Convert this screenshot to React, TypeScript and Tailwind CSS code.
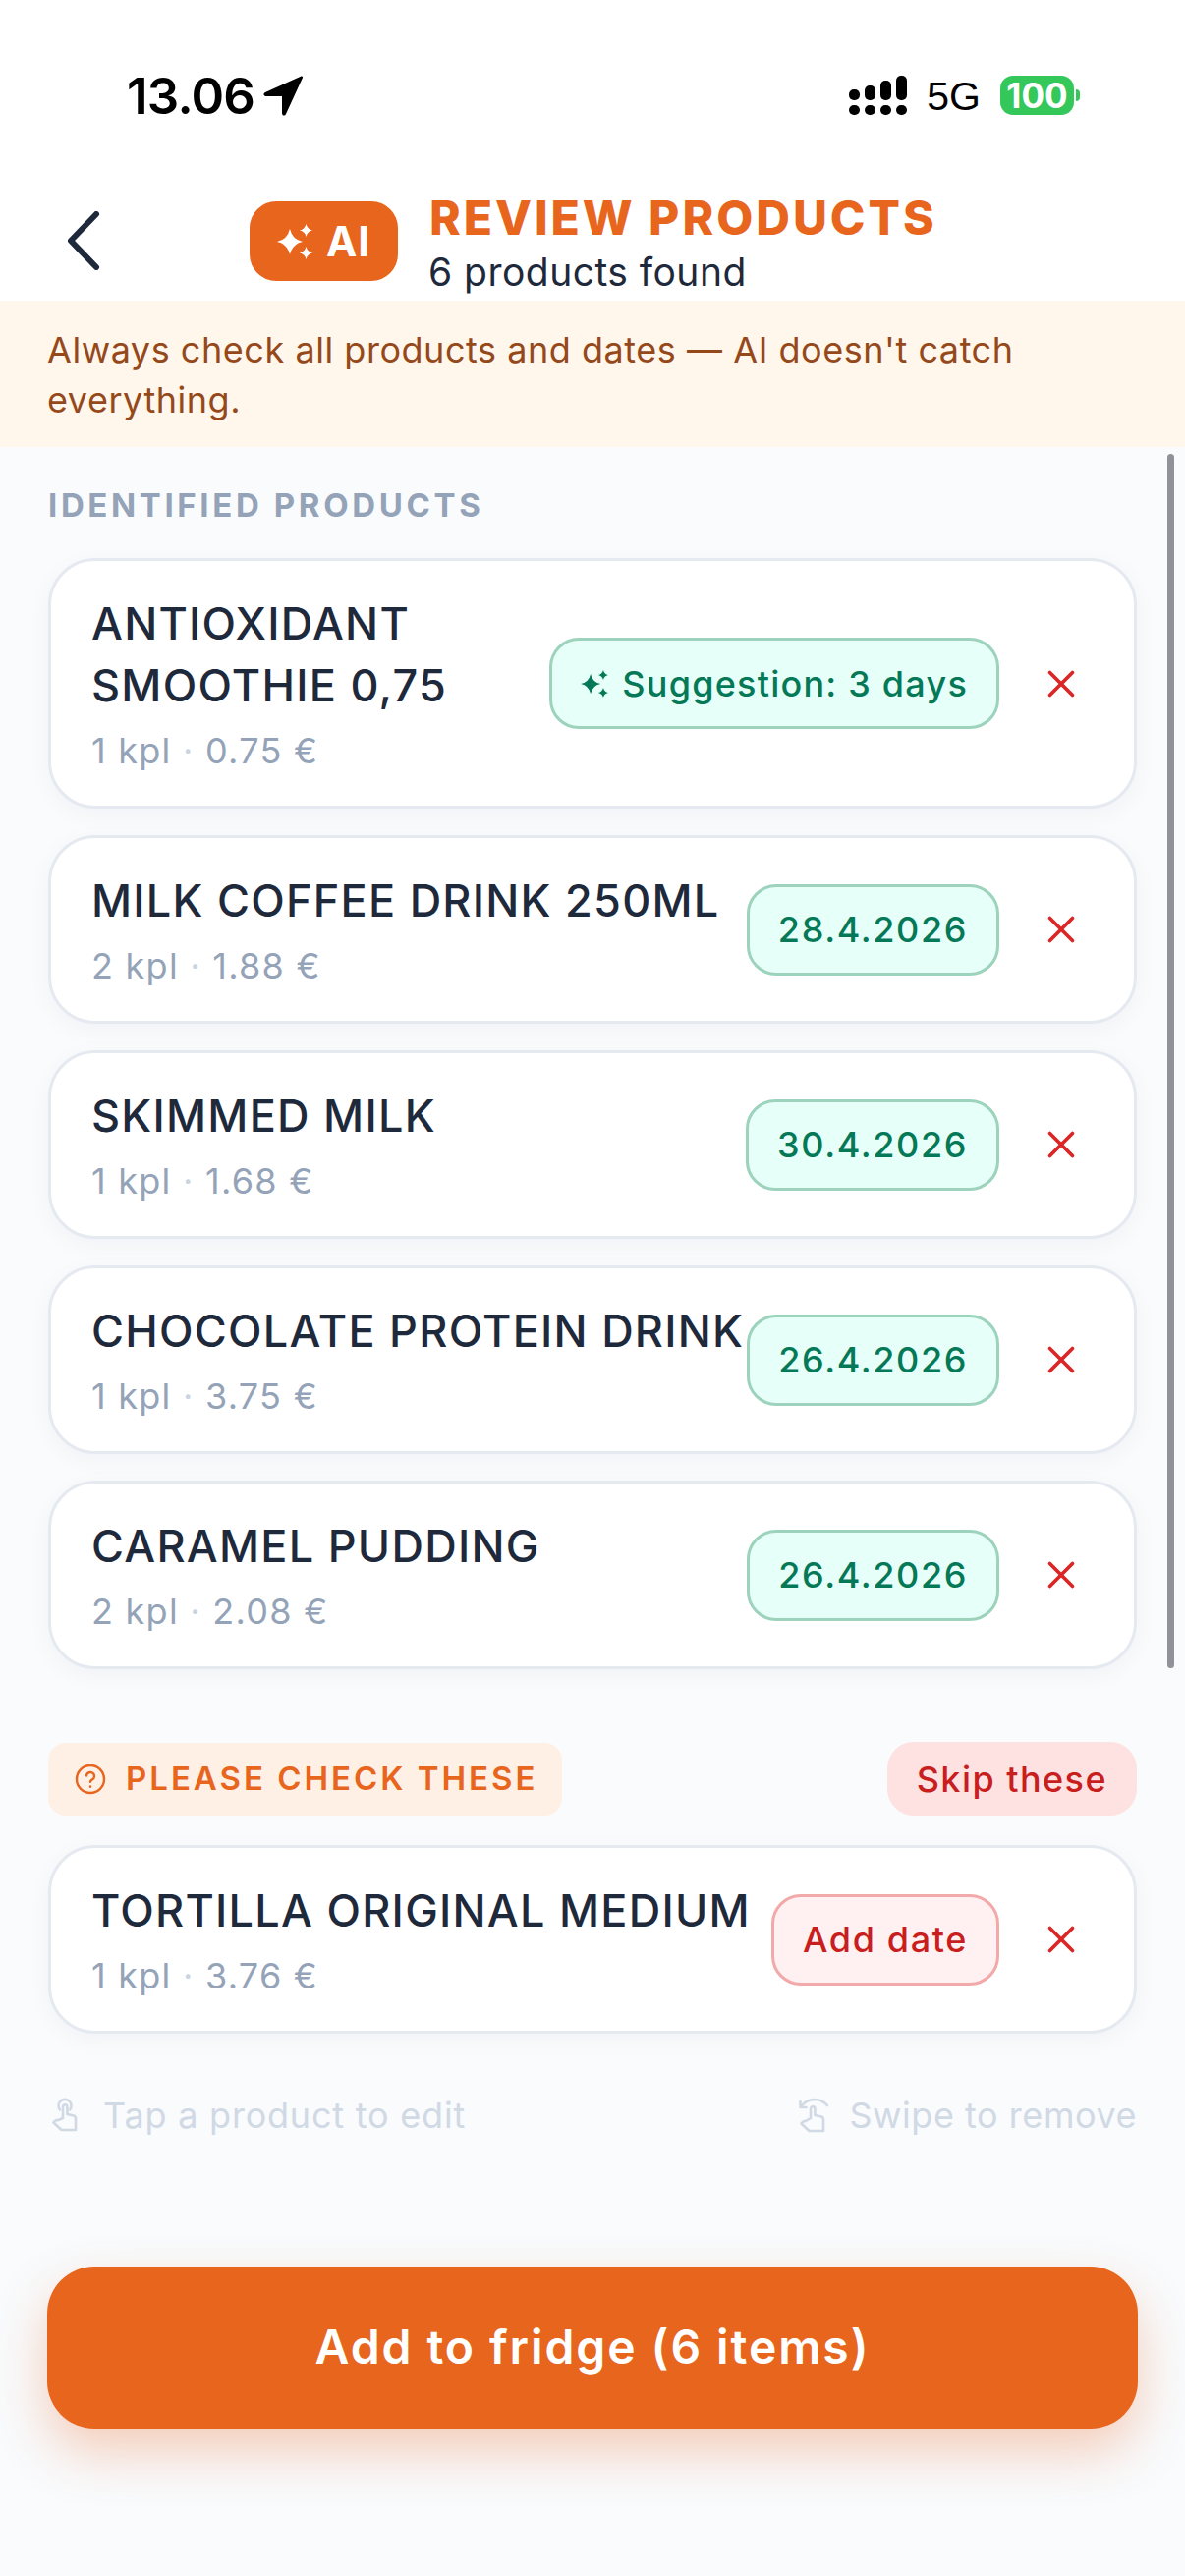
import React from "react";
import { X } from "lucide-react";

const SPARK = "M0 -1 Q.18 -.18 1 0 Q.18 .18 0 1 Q-.18 .18 -1 0 Q-.18 -.18 0 -1Z";

function Sparkles({ className }: { className?: string }) {
  return (
    <svg viewBox="0 0 36 36" className={className} fill="currentColor">
      <path transform="translate(13 18) scale(13)" d={SPARK} />
      <path transform="translate(29.5 6.5) scale(6.5)" d={SPARK} />
      <path transform="translate(29.5 29.5) scale(6.5)" d={SPARK} />
    </svg>
  );
}

function TapIcon({ className }: { className?: string }) {
  return (
    <svg viewBox="0 0 30 36" className={className} fill="none" stroke="currentColor" strokeWidth="2.6" strokeLinecap="round" strokeLinejoin="round">
      <path d="M10 12.5a6.5 6.5 0 1 1 10 0" />
      <path d="M13 21V9.5a2.2 2.2 0 0 1 4.4 0V17l6.4 1.6c1.4.4 2.2 1.5 2.2 2.9V33H11.5L3.5 25.5l1.8-1.8c.6-.6 1.5-.8 2.3-.5z" />
    </svg>
  );
}

function SwipeIcon({ className }: { className?: string }) {
  return (
    <svg viewBox="0 0 34 36" className={className} fill="none" stroke="currentColor" strokeWidth="2.6" strokeLinecap="round" strokeLinejoin="round">
      <path d="M3 9.5C7 4 12 2 17 2s9.5 2 13 6" />
      <path d="M2.5 4v6h6" />
      <path d="M13 21V11.5a2.2 2.2 0 0 1 4.4 0V18l6.4 1.6c1.4.4 2.2 1.5 2.2 2.9V34H11.5L3.5 26.5l1.8-1.8c.6-.6 1.5-.8 2.3-.5z" />
    </svg>
  );
}

function Card({ name, qty, price, chip, tone = "green", spark = false }: { name: string; qty: string; price: string; chip: string; tone?: "green" | "red"; spark?: boolean }) {
  return (
    <div className="flex items-center rounded-[48px] border-[3px] border-[#e5e9f0] bg-white pl-[41px] pr-[47px] shadow-[0_6px_24px_rgba(15,23,42,0.04)]">
      <div className="min-w-0 flex-1 pb-[21px] pt-[32px]">
        <div className="whitespace-pre text-[45px] font-medium leading-[63px] tracking-[0.028em] text-[#1e293b]">{name}</div>
        <div className="text-[36px] leading-[70px] tracking-[0.035em] text-[#94a3b8]">
          {qty} <span className="text-[#cbd5e1]">·</span> {price}
        </div>
      </div>
      {tone === "green" ? (
        <div className={`flex h-[93px] shrink-0 items-center gap-[14px] rounded-[30px] border-[3px] border-[#9dd3bd] bg-[#e6fff8] px-[29px] text-[36px] font-medium text-[#047857] ${spark ? "tracking-[0.034em]" : "tracking-[0.045em]"}`}>
          {spark && <Sparkles className="h-[28px] w-[28px]" />}
          {chip}
        </div>
      ) : (
        <div className="flex h-[93px] shrink-0 items-center rounded-[30px] border-[3px] border-[#f2a9a9] bg-[#fff1f1] px-[29px] text-[36px] font-medium tracking-[0.045em] text-[#c81e1e]">
          {chip}
        </div>
      )}
      <div className="ml-[36px] flex w-[54px] shrink-0 items-center justify-center text-[#dc2626]">
        <X size={46} strokeWidth={1.9} />
      </div>
    </div>
  );
}

export default function App() {
  return (
    <div className="relative flex h-[2622px] w-[1206px] flex-col overflow-hidden bg-[#f9fbfd] font-['Inter',sans-serif]">
      <div className="bg-white">
        <div className="flex h-[186px] items-start justify-between pl-[129px] pr-[107px] pt-[67px]">
          <div className="flex items-center gap-[8px]">
            <span className="text-[51px] font-semibold leading-[62px] tracking-[-0.015em] text-black">13.06</span>
            <svg viewBox="0 0 42 42" className="h-[42px] w-[42px]" fill="#000">
              <path d="M41 2 C41.5 1 40.5 0 39 .8 L3 17 C.5 18.3 1.2 21 4 21 L20 21 L20 38 C20 41 23 41.5 24 39 Z" />
            </svg>
          </div>
          <div className="flex items-start gap-[20px] pt-[10px]">
            <svg viewBox="0 0 59 40" className="h-[40px] w-[59px]" fill="#000">
              <rect x="0" y="14" width="11" height="11" rx="5" /><rect x="16" y="10" width="11" height="15" rx="5" /><rect x="32" y="5" width="11" height="20" rx="5" /><rect x="48" y="0" width="11" height="25" rx="5" />
              <rect x="0" y="30" width="11" height="10" rx="5" /><rect x="16" y="30" width="11" height="10" rx="5" /><rect x="32" y="30" width="11" height="10" rx="5" /><rect x="48" y="30" width="11" height="10" rx="5" />
            </svg>
            <span className="font-['Liberation_Sans',sans-serif] text-[41px] leading-[42px] text-black">5G</span>
            <div className="flex items-center gap-[2px]">
              <div className="flex h-[40px] w-[75px] items-center justify-center rounded-[13px] bg-[#34c759] text-[35px] font-bold text-white">100</div>
              <div className="h-[12px] w-[4px] rounded-r-[4px] bg-[#34c759]" />
            </div>
          </div>
        </div>
        <div className="flex h-[120px] items-start pl-[68px]">
          <svg viewBox="0 0 34 60" className="mt-[29px] h-[60px] w-[34px]" fill="none" stroke="#1e293b" strokeWidth="6" strokeLinecap="round" strokeLinejoin="round">
            <path d="M30 3 L4 30 L30 57" />
          </svg>
          <div className="ml-[152px] mt-[19px] flex h-[81px] w-[151px] items-center justify-center gap-[14px] rounded-[27px] bg-[#e8651d] text-[42px] font-bold tracking-[0.02em] text-white">
            <Sparkles className="h-[36px] w-[36px]" />
            AI
          </div>
          <div className="ml-[32px] pt-[8px]">
            <div className="text-[48px] font-extrabold leading-[56px] tracking-[0.062em] text-[#e8651d]">REVIEW PRODUCTS</div>
            <div className="-ml-[1px] text-[39px] leading-[53px] tracking-[0.012em] text-[#1e293b]">6 products found</div>
          </div>
        </div>
      </div>

      <div className="h-[149px] bg-[#fff6ec] px-[48px] pb-[22px] pt-[25px] text-[36px] leading-[51px] tracking-[0.015em] text-[#95491a]">
        Always check all products and dates — AI doesn't catch everything.
      </div>

      <div className="flex flex-1 flex-col px-[49px]">
        <div className="mt-[37px] text-[33px] font-bold leading-[44px] tracking-[0.11em] text-[#94a3b8]">IDENTIFIED PRODUCTS</div>
        <div className="mt-[32px] flex flex-col gap-[27px]">
          <Card name={"ANTIOXIDANT\nSMOOTHIE 0,75"} qty="1 kpl" price="0.75 €" chip="Suggestion: 3 days" spark />
          <Card name="MILK COFFEE DRINK 250ML" qty="2 kpl" price="1.88 €" chip="28.4.2026" />
          <Card name="SKIMMED MILK" qty="1 kpl" price="1.68 €" chip="30.4.2026" />
          <Card name="CHOCOLATE PROTEIN DRINK" qty="1 kpl" price="3.75 €" chip="26.4.2026" />
          <Card name="CARAMEL PUDDING" qty="2 kpl" price="2.08 €" chip="26.4.2026" />
        </div>
        <div className="mt-[74px] flex h-[75px] items-center justify-between">
          <div className="flex h-[74px] items-center gap-[20px] rounded-[18px] bg-[#fff0e6] pl-[27px] pr-[25px] text-[33px] font-semibold tracking-[0.09em] text-[#e8651d]">
            <svg viewBox="0 0 32 32" className="h-[32px] w-[32px]" fill="none" stroke="currentColor" strokeWidth="2.4" strokeLinecap="round">
              <circle cx="16" cy="16" r="14" /><path d="M12 12.5a4 4 0 0 1 8 1c0 2.8-4 3-4 5.2" /><path d="M16 23.5v.2" />
            </svg>
            PLEASE CHECK THESE
          </div>
          <div className="flex h-[75px] items-center rounded-[27px] bg-[#fee2e2] px-[30px] text-[36px] font-medium tracking-[0.04em] text-[#c81e1e]">Skip these</div>
        </div>
        <div className="mt-[30px]">
          <Card name="TORTILLA ORIGINAL MEDIUM" qty="1 kpl" price="3.76 €" chip="Add date" tone="red" />
        </div>
        <div className="mt-[56px] flex items-center justify-between pl-[2px] text-[36px] leading-[54px] text-[#d0d9e4]">
          <div className="flex items-center gap-[24px] tracking-[0.022em]"><TapIcon className="h-[36px] w-[30px]" />Tap a product to edit</div>
          <div className="flex items-center gap-[18px] tracking-[0.015em]"><SwipeIcon className="h-[36px] w-[34px]" />Swipe to remove</div>
        </div>
      </div>

      <div className="px-[48px] pb-[150px]">
        <div className="flex h-[165px] items-center justify-center rounded-[48px] bg-[#e8651d] pb-[2px] text-[48px] font-semibold tracking-[0.04em] text-white shadow-[0_24px_54px_rgba(232,101,29,0.3)]">
          Add to fridge (6 items)
        </div>
      </div>

      <div className="absolute left-[1188px] top-[462px] h-[1236px] w-[7px] rounded-full bg-[#8f9298]" />
    </div>
  );
}
